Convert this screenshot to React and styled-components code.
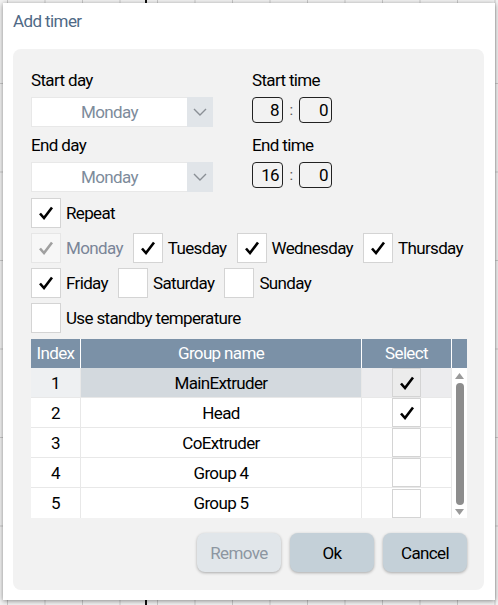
import React from "react"
import styled, { createGlobalStyle } from "styled-components"

const GlobalStyle = createGlobalStyle`
  html, body {
    margin: 0;
    padding: 0;
  }
  body {
    font-family: "Roboto", "Liberation Sans", sans-serif;
    background-color: #f3f3f3;
    background-image:
      linear-gradient(to right, transparent 145px, #111 145px, #111 147px, transparent 147px),
      linear-gradient(to right, #c9c9c9 1px, transparent 1px),
      linear-gradient(to bottom, #c9c9c9 1px, transparent 1px);
    background-size: 100% 100%, 37.5px 88.5px, 37.5px 88.5px;
    background-repeat: no-repeat, repeat, repeat;
    background-position: 0 0, 7px 83px, 7px 83px;
    min-height: 605px;
  }
`

const Page = styled.div`
  padding: 3px;
`

const Dialog = styled.div`
  width: 492px;
  height: 597px;
  background: #fff;
  box-shadow: 0 1px 5px rgba(0, 0, 0, 0.45);
  display: flex;
  flex-direction: column;
  box-sizing: border-box;
`

const Title = styled.div`
  height: 46px;
  box-sizing: border-box;
  padding: 8px 0 0 10px;
  font-size: 17px;
  line-height: 20px;
  color: #4f6986;
  letter-spacing: -0.6px;
`

const Panel = styled.div`
  flex: 1;
  margin: 0 11px 10px 10px;
  background: #f2f2f2;
  border-radius: 8px;
  padding: 21px 17px 18px 18px;
  display: flex;
  flex-direction: column;
  font-size: 17px;
  letter-spacing: -0.65px;
  color: #000;
`

const TopGrid = styled.div`
  display: grid;
  grid-template-columns: 182px auto;
  column-gap: 39px;
`

const Field = styled.div`
  display: flex;
  flex-direction: column;
  margin-bottom: ${(p) => (p.$last ? "0" : "8px")};
`

const Label = styled.div`
  height: 20px;
  line-height: 20px;
  margin-bottom: 7px;
`

const Select = styled.div`
  display: flex;
  height: 30px;
  width: 182px;
`

const SelectValue = styled.div`
  flex: 1;
  background: #fff;
  border: 1px solid #e8e8e8;
  border-right: none;
  color: #7d8b9b;
  text-align: center;
  line-height: 28px;
`

const SelectArrow = styled.div`
  width: 26px;
  background: #e1e5e9;
  display: flex;
  align-items: center;
  justify-content: center;
`

const TimeRow = styled.div`
  display: flex;
  align-items: center;
  height: 26px;
  margin-bottom: 4px;
`

const TimeBox = styled.div`
  width: ${(p) => p.$w}px;
  height: 26px;
  box-sizing: border-box;
  border: 1px solid #222;
  border-radius: 4px;
  text-align: right;
  padding-right: 3px;
  line-height: 24px;
`

const Colon = styled.span`
  width: 16px;
  text-align: center;
  color: #555;
  font-size: 15px;
`

const Checks = styled.div`
  display: flex;
  flex-direction: column;
  gap: 5px;
  margin-top: 6px;
`

const CheckLine = styled.div`
  display: flex;
  gap: 10px;
`

const CheckItem = styled.label`
  display: flex;
  align-items: center;
  gap: 5px;
  color: ${(p) => (p.$disabled ? "#7a8598" : "#000")};
`

const Box = styled.span`
  width: ${(p) => p.$size || 30}px;
  height: ${(p) => p.$size || 30}px;
  box-sizing: border-box;
  border: 1px solid ${(p) => (p.$disabled ? "#e6e6e6" : "#d4d4d4")};
  background: ${(p) => p.$bg || "#fff"};
  display: flex;
  align-items: center;
  justify-content: center;
`

const Table = styled.div`
  margin-top: 6px;
  width: 436px;
`

const HeadRow = styled.div`
  display: grid;
  grid-template-columns: 49px 280px 89px 15px;
  column-gap: 1px;
  background: #fff;
  height: 29px;
`

const HeadCell = styled.div`
  background: #7b91a7;
  color: #fff;
  text-align: center;
  line-height: 29px;
`

const Body = styled.div`
  display: flex;
  background: #fff;
`

const Rows = styled.div`
  width: 420px;
  border-right: 1px solid #e8e8e8;
`

const Row = styled.div`
  display: grid;
  grid-template-columns: 49px 280px 89px;
  column-gap: 1px;
  background: #e8e8e8;
  height: 30px;
  box-sizing: border-box;
  border-bottom: 1px solid #e8e8e8;
  &:last-child {
    border-bottom: none;
  }
`

const Cell = styled.div`
  background: ${(p) => p.$bg || "#fff"};
  display: flex;
  align-items: center;
  justify-content: center;
`

const Scroll = styled.div`
  width: 15px;
  display: flex;
  flex-direction: column;
  align-items: center;
  padding: 5px 0 3px;
  box-sizing: border-box;
`

const Thumb = styled.div`
  width: 8px;
  flex: 1;
  margin: 4px 0;
  background: #8d8d8d;
  border-radius: 4px;
`

const Buttons = styled.div`
  display: flex;
  justify-content: flex-end;
  gap: 9px;
  margin-top: 15px;
  width: 436px;
`

const Button = styled.button`
  width: 84px;
  height: 39px;
  border: none;
  border-radius: 8px;
  font-family: inherit;
  font-size: 17px;
  letter-spacing: -0.6px;
  background: ${(p) => (p.$disabled ? "#e1e6ea" : "#c4d0d8")};
  color: ${(p) => (p.$disabled ? "#8d96a1" : "#000")};
  box-shadow: 0 1px 3px rgba(0, 0, 0, 0.3);
`

const Check = ({ color = "#000" }) => (
  <svg width="16" height="14" viewBox="0 0 16 14">
    <path d="M2 7.5 L6 12 L14 1.5" fill="none" stroke={color} strokeWidth="2.6" strokeLinejoin="miter" />
  </svg>
)

const Chevron = () => (
  <svg width="14" height="8" viewBox="0 0 14 8">
    <path d="M1 1 L7 7 L13 1" fill="none" stroke="#8a8f95" strokeWidth="1.4" />
  </svg>
)

const Arrow = ({ up }) => (
  <svg width="9" height="6" viewBox="0 0 9 6">
    <path d={up ? "M0 6 L4.5 0 L9 6 Z" : "M0 0 L4.5 6 L9 0 Z"} fill="#9a9a9a" />
  </svg>
)

const CheckBox = ({ label, checked, disabled }) => (
  <CheckItem $disabled={disabled}>
    <Box $disabled={disabled} $bg={disabled ? "#f7f7f7" : "#fff"}>
      {checked && <Check color={disabled ? "#a0a0a0" : "#000"} />}
    </Box>
    {label}
  </CheckItem>
)

const groups = [
  { name: "MainExtruder", on: true },
  { name: "Head", on: true },
  { name: "CoExtruder", on: false },
  { name: "Group 4", on: false },
  { name: "Group 5", on: false },
]

export default function App() {
  return (
    <Page>
      <GlobalStyle />
      <Dialog>
        <Title>Add timer</Title>
        <Panel>
          <TopGrid>
            <div>
              <Field>
                <Label>Start day</Label>
                <Select>
                  <SelectValue>Monday</SelectValue>
                  <SelectArrow><Chevron /></SelectArrow>
                </Select>
              </Field>
              <Field $last>
                <Label>End day</Label>
                <Select>
                  <SelectValue>Monday</SelectValue>
                  <SelectArrow><Chevron /></SelectArrow>
                </Select>
              </Field>
            </div>
            <div>
              <Field>
                <Label>Start time</Label>
                <TimeRow>
                  <TimeBox $w={31}>8</TimeBox>
                  <Colon>:</Colon>
                  <TimeBox $w={33}>0</TimeBox>
                </TimeRow>
              </Field>
              <Field $last>
                <Label>End time</Label>
                <TimeRow>
                  <TimeBox $w={31}>16</TimeBox>
                  <Colon>:</Colon>
                  <TimeBox $w={33}>0</TimeBox>
                </TimeRow>
              </Field>
            </div>
          </TopGrid>

          <Checks>
            <CheckLine>
              <CheckBox label="Repeat" checked />
            </CheckLine>
            <CheckLine>
              <CheckBox label="Monday" checked disabled />
              <CheckBox label="Tuesday" checked />
              <CheckBox label="Wednesday" checked />
              <CheckBox label="Thursday" checked />
            </CheckLine>
            <CheckLine>
              <CheckBox label="Friday" checked />
              <CheckBox label="Saturday" />
              <CheckBox label="Sunday" />
            </CheckLine>
            <CheckLine>
              <CheckBox label="Use standby temperature" />
            </CheckLine>
          </Checks>

          <Table>
            <HeadRow>
              <HeadCell>Index</HeadCell>
              <HeadCell>Group name</HeadCell>
              <HeadCell>Select</HeadCell>
              <HeadCell />
            </HeadRow>
            <Body>
              <Rows>
                {groups.map((g, i) => {
                  const sel = i === 0
                  return (
                    <Row key={g.name}>
                      <Cell $bg={sel ? "#eef0f2" : "#fff"}>{i + 1}</Cell>
                      <Cell $bg={sel ? "#d3d9de" : "#fff"}>{g.name}</Cell>
                      <Cell $bg={sel ? "#ececee" : "#fff"}>
                        <Box $size={29} $bg={sel ? "#ececec" : "#fff"}>
                          {g.on && <Check />}
                        </Box>
                      </Cell>
                    </Row>
                  )
                })}
              </Rows>
              <Scroll>
                <Arrow up />
                <Thumb />
                <Arrow />
              </Scroll>
            </Body>
          </Table>

          <Buttons>
            <Button $disabled>Remove</Button>
            <Button>Ok</Button>
            <Button>Cancel</Button>
          </Buttons>
        </Panel>
      </Dialog>
    </Page>
  )
}
